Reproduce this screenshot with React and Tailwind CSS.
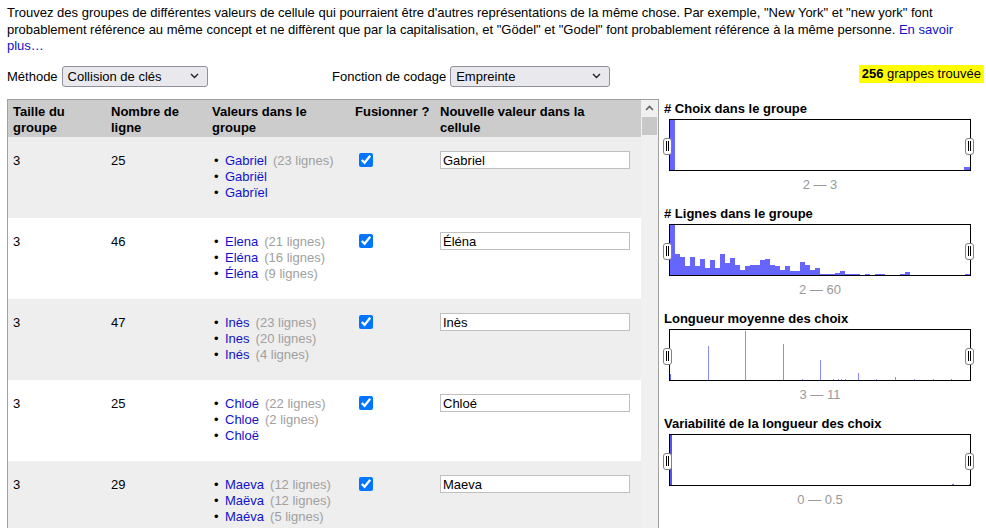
import React from 'react';

const rows = [
  { size: 3, count: 25, values: [['Gabriel', 23], ['Gabriël'], ['Gabrïel']], value: 'Gabriel' },
  { size: 3, count: 46, values: [['Elena', 21], ['Eléna', 16], ['Éléna', 9]], value: 'Éléna' },
  { size: 3, count: 47, values: [['Inès', 23], ['Ines', 20], ['Inés', 4]], value: 'Inès' },
  { size: 3, count: 25, values: [['Chloé', 22], ['Chloe', 2], ['Chloë']], value: 'Chloé' },
  { size: 3, count: 29, values: [['Maeva', 12], ['Maëva', 12], ['Maéva', 5]], value: 'Maeva' },
];

// bar heights (px, out of 50) for the "# Lignes" histogram, 60 bins of 5px
const lignes = [
  50, 21, 18, 9, 18, 9, 16, 7, 15, 7, 21, 12, 17, 10, 5, 9, 10, 10, 15, 16,
  10, 9, 5, 9, 4, 4, 13, 10, 5, 7, 1, 1, 1, 2, 4, 1, 1, 1, 0, 1,
  0, 1, 1, 0, 0, 0, 1, 3, 0, 0, 0, 0, 0, 0, 0, 0, 0, 0, 0, 1,
];

const longueur = [
  [0, 6], [38, 34], [75, 49], [113, 36], [132, 1], [150, 20], [163, 1], [168, 1],
  [171, 1], [175, 1], [188, 7], [206, 1], [225, 3], [244, 1], [263, 1], [281, 1],
];

const Select = ({ label, width }) => (
  <div className={`${width} h-[21px] flex items-center justify-between pl-[5px] pr-[8px] bg-[#e9e9ed] border border-[#8f8f9d] rounded-[3px]`}>
    <span className="pt-px">{label}</span>
    <svg width="9" height="6" viewBox="0 0 9 6">
      <polyline points="1,1 4.5,4.5 8,1" fill="none" stroke="#222" strokeWidth="1.4" />
    </svg>
  </div>
);

const Handle = ({ side }) => (
  <div className={`absolute top-[18px] ${side === 'left' ? 'left-[-7px]' : 'right-[-4px]'} w-[9px] h-[17px] bg-white border border-[#808080] rounded-[3px] flex items-center justify-center gap-[1px]`}>
    <span className="w-px h-[10px] bg-black" />
    <span className="w-px h-[10px] bg-black" />
  </div>
);

const Chart = ({ title, range, children }) => (
  <div className="h-[105px]">
    <div className="font-bold leading-[16px] pt-px">{title}</div>
    <div className="relative mt-[2px] ml-[5px] w-[302px] h-[52px] border border-black bg-white">
      <svg width="300" height="50" className="block">{children}</svg>
      <Handle side="left" />
      <Handle side="right" />
    </div>
    <div className="mt-[6px] ml-[5px] w-[302px] text-center leading-[16px] text-[#999]">{range}</div>
  </div>
);

const App = () => {
  return (
    <div className="w-[986px] h-[528px] overflow-hidden bg-white text-black text-[13px] font-['Liberation_Sans',Arial,sans-serif]">
      <p className="px-[7px] pt-[5px] leading-[16.5px]">
        Trouvez des groupes de différentes valeurs de cellule qui pourraient être d'autres représentations de la même chose. Par exemple, "New York" et "new york" font probablement référence au même concept et ne diffèrent que par la capitalisation, et "Gödel" et "Godel" font probablement référence à la même personne. <span className="text-[#1111cc]">En savoir plus…</span>
      </p>

      <div className="flex items-center h-[21px] mt-[11px] pl-[7px] pr-[2px]">
        <div className="w-[325px] flex items-center gap-[4px]">
          <span className="pt-px">Méthode</span>
          <Select label="Collision de clés" width="w-[146px]" />
        </div>
        <div className="flex items-center gap-[4px]">
          <span className="pt-px">Fonction de codage</span>
          <Select label="Empreinte" width="w-[160px]" />
        </div>
        <div className="ml-auto -mt-[5px] h-[18px] leading-[18px] px-[3px] bg-[#ffff00]">
          <span className="font-bold">256</span> grappes trouvée
        </div>
      </div>

      <div className="flex mt-[12px] pl-[7px]">
        <div className="w-[652px] h-[440px] flex border-l border-t border-r border-[#a0a0a0]">
          <div className="w-[633px]">
            <div className="grid grid-cols-[98px_101px_143px_85px_206px] bg-[#cccccc] font-bold leading-[16px] h-[37px] pt-[4px]">
              <div className="pl-[5px]">Taille du<br />groupe</div>
              <div className="pl-[5px]">Nombre de<br />ligne</div>
              <div className="pl-[5px]">Valeurs dans le<br />groupe</div>
              <div className="pl-[5px]">Fusionner ?</div>
              <div className="pl-[5px]">Nouvelle valeur dans la<br />cellule</div>
            </div>
            {rows.map((r, i) => (
              <div
                key={i}
                className={`grid grid-cols-[98px_101px_143px_85px_206px] h-[81px] leading-[16px] ${i % 2 === 0 ? 'bg-[#eeeeee]' : 'bg-white'}`}
              >
                <div className="pl-[5px] pt-[16px]">{r.size}</div>
                <div className="pl-[5px] pt-[16px]">{r.count}</div>
                <div className="pl-[7px] pt-[16px]">
                  {r.values.map(([name, n], j) => (
                    <div key={j} className="flex">
                      <span className="w-[11px]">•</span>
                      <span className="text-[#1111cc]">{name}</span>
                      {n && <span className="ml-[6px] text-[#a0a0a0]">({n} lignes)</span>}
                    </div>
                  ))}
                </div>
                <div className="pl-[9px] pt-[16px]">
                  <input type="checkbox" defaultChecked readOnly className="block m-0 w-[14px] h-[14px] accent-[#0075ff]" />
                </div>
                <div className="pl-[5px] pt-[14px]">
                  <div className="w-[190px] h-[18px] border border-[#c0c0c0] bg-white pl-[2px] pt-px leading-[16px]">{r.value}</div>
                </div>
              </div>
            ))}
          </div>
          <div className="w-[17px] bg-[#f0f0f0] flex flex-col">
            <div className="h-[17px] flex items-center justify-center">
              <svg width="9" height="6" viewBox="0 0 9 6">
                <polyline points="1,5 4.5,1.5 8,5" fill="none" stroke="#606060" strokeWidth="1.6" />
              </svg>
            </div>
            <div className="mx-[1px] h-[18px] bg-[#c8c8c8]" />
          </div>
        </div>

        <div className="flex-1 pl-[5px] pt-px">
          <Chart title="# Choix dans le groupe" range="2 — 3">
            <rect x="0" y="0" width="5" height="50" fill="#6666ff" />
            <rect x="294" y="47" width="6" height="3" fill="#6666ff" />
          </Chart>
          <Chart title="# Lignes dans le groupe" range="2 — 60">
            {lignes.map((h, i) => (h > 0 ? <rect key={i} x={i * 5} y={50 - h} width="5" height={h} fill="#6666ff" /> : null))}
          </Chart>
          <Chart title="Longueur moyenne des choix" range="3 — 11">
            {longueur.map(([x, h], i) => (
              <rect key={i} x={x} y={50 - h} width="1" height={h} fill={i === 0 ? '#6666ff' : '#8c8cff'} />
            ))}
          </Chart>
          <Chart title="Variabilité de la longueur des choix" range="0 — 0.5">
            <rect x="0" y="0" width="2" height="50" fill="#5555ee" />
            <rect x="282" y="49" width="2" height="1" fill="#6666ff" />
            <rect x="299" y="49" width="1" height="1" fill="#6666ff" />
          </Chart>
        </div>
      </div>
    </div>
  );
};

export default App;
